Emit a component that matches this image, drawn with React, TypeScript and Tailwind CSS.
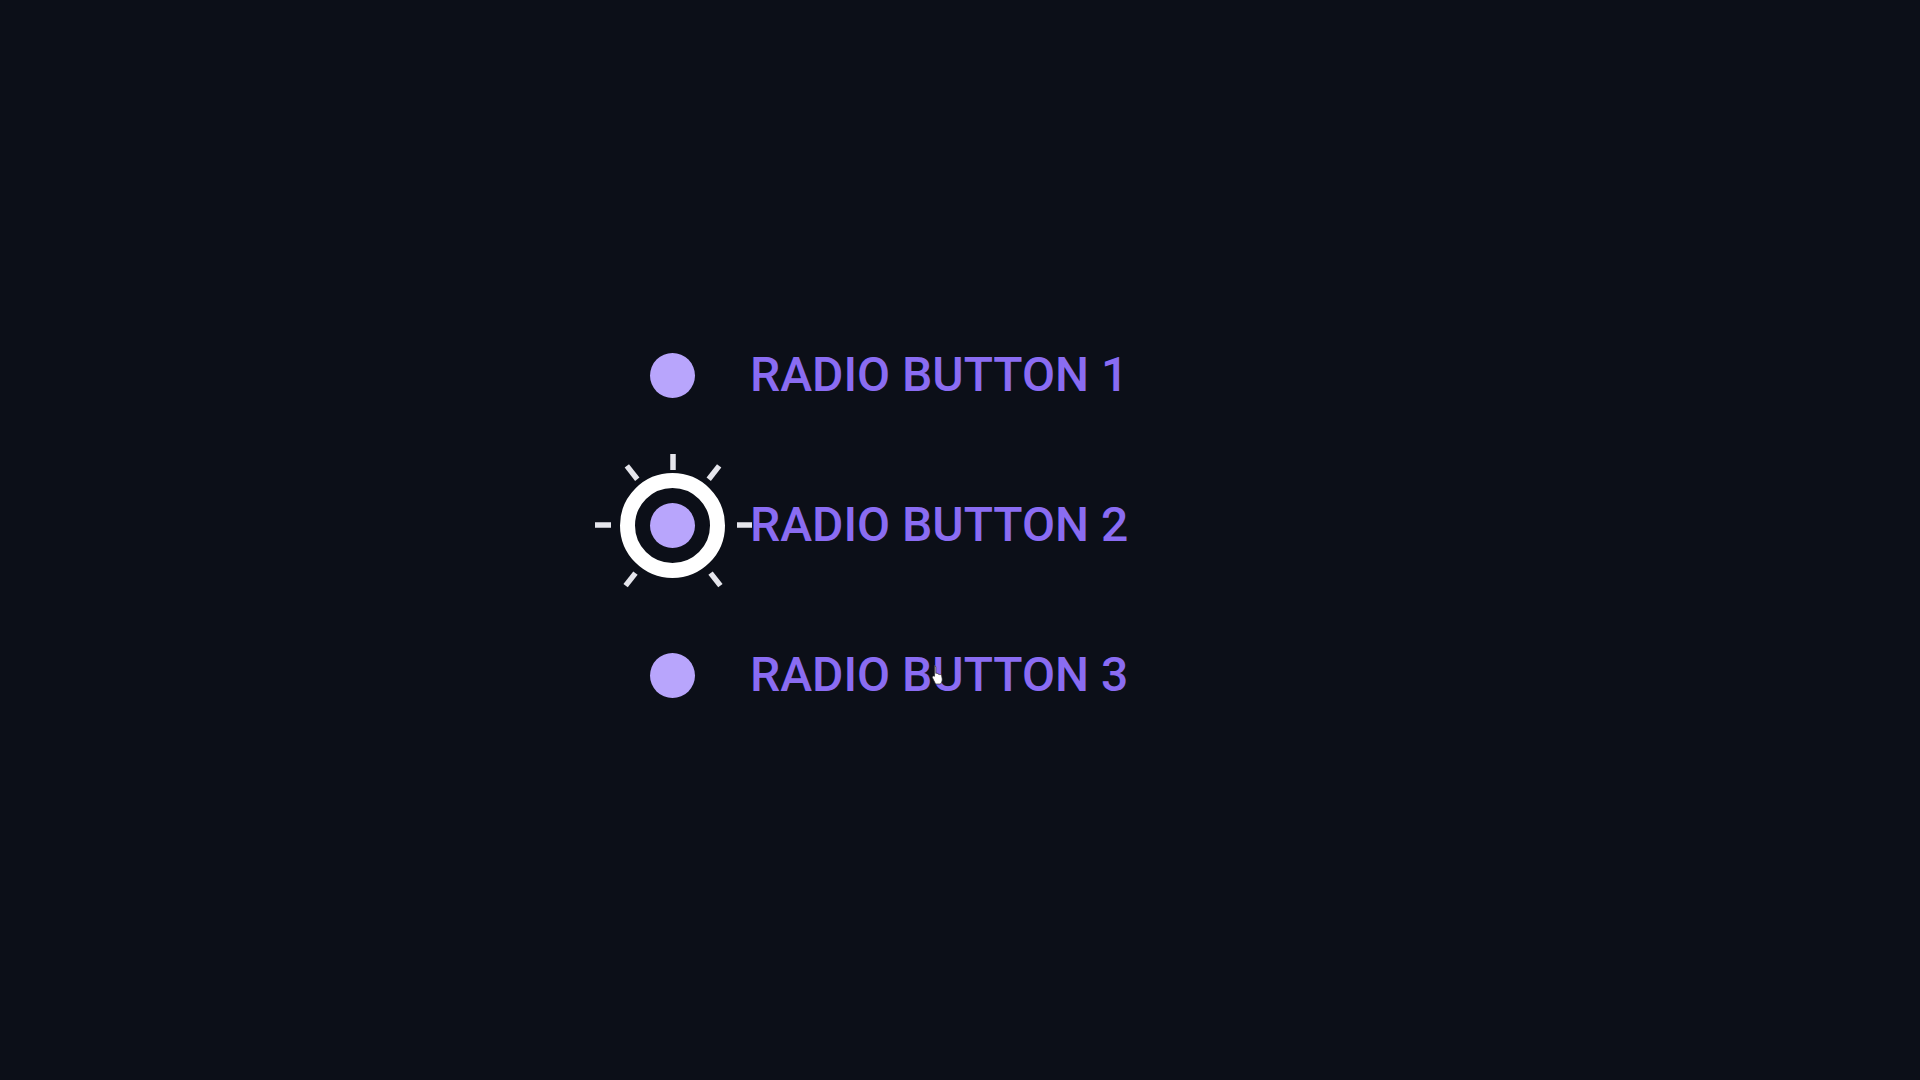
import React, { useState } from 'react';

const options = ['RADIO BUTTON 1', 'RADIO BUTTON 2', 'RADIO BUTTON 3'];

// rays around the focused radio: [angle in degrees, inner radius, outer radius]
const rays: [number, number, number][] = [
  [-90, 55, 71],
  [-128, 58, 75],
  [-52, 58, 75],
  [180, 62, 78],
  [0, 64, 79],
  [128, 61, 77],
  [52, 61, 77],
];

const Burst = () => (
  <svg className="absolute left-1/2 top-1/2 -translate-x-1/2 -translate-y-1/2 pointer-events-none" width="170" height="170" viewBox="-85 -85 170 170">
    {rays.map(([a, r1, r2], i) => {
      const rad = (a * Math.PI) / 180;
      return (
        <line
          key={i}
          x1={Math.cos(rad) * r1}
          y1={Math.sin(rad) * r1}
          x2={Math.cos(rad) * r2}
          y2={Math.sin(rad) * r2}
          stroke="#e6e6ec"
          strokeWidth="5.5"
        />
      );
    })}
  </svg>
);

const Cursor = () => (
  <svg className="absolute pointer-events-none" style={{ left: 930, top: 664 }} width="15" height="21" viewBox="0 0 14 20">
    <path
      d="M4 1.5c.8 0 1.4.6 1.4 1.4v6l.6-.1c.7-.1 1.3.3 1.5.9.6-.3 1.4-.1 1.7.5.6-.3 1.5 0 1.7.7l.5 2.8c.3 1.6-.1 3.2-1 4.5l-.6.9H5.2L2.3 13.4c-.4-.6-.3-1.4.3-1.8.5-.4 1.2-.3 1.6.1V2.9c0-.8-.1-1.4-.2-1.4z"
      fill="#ffffff"
      stroke="#2a2a2a"
      strokeWidth="0.7"
    />
  </svg>
);

export default function App() {
  const [selected, setSelected] = useState(1);

  return (
    <div className="relative min-h-screen w-full bg-[#0c0f18] overflow-hidden" style={{ fontFamily: 'Roboto, "Liberation Sans", sans-serif' }}>
      <div className="flex flex-col pt-[300px] pl-[620px]">
        {options.map((label, i) => (
          <label key={label} className="flex h-[150px] items-center gap-[25px] cursor-pointer" onClick={() => setSelected(i)}>
            <div className="relative flex h-[105px] w-[105px] items-center justify-center">
              {selected === i ? (
                <>
                  <Burst />
                  <div className="flex h-[105px] w-[105px] items-center justify-center rounded-full border-[15px] border-white">
                    <div className="h-[45px] w-[45px] rounded-full bg-[#b8a5fc]" />
                  </div>
                </>
              ) : (
                <div className="h-[45px] w-[45px] rounded-full bg-[#b8a5fc]" />
              )}
            </div>
            <span className="text-[48px] font-medium leading-none text-[#8a6cf2]">{label}</span>
          </label>
        ))}
      </div>
      <Cursor />
    </div>
  );
}
